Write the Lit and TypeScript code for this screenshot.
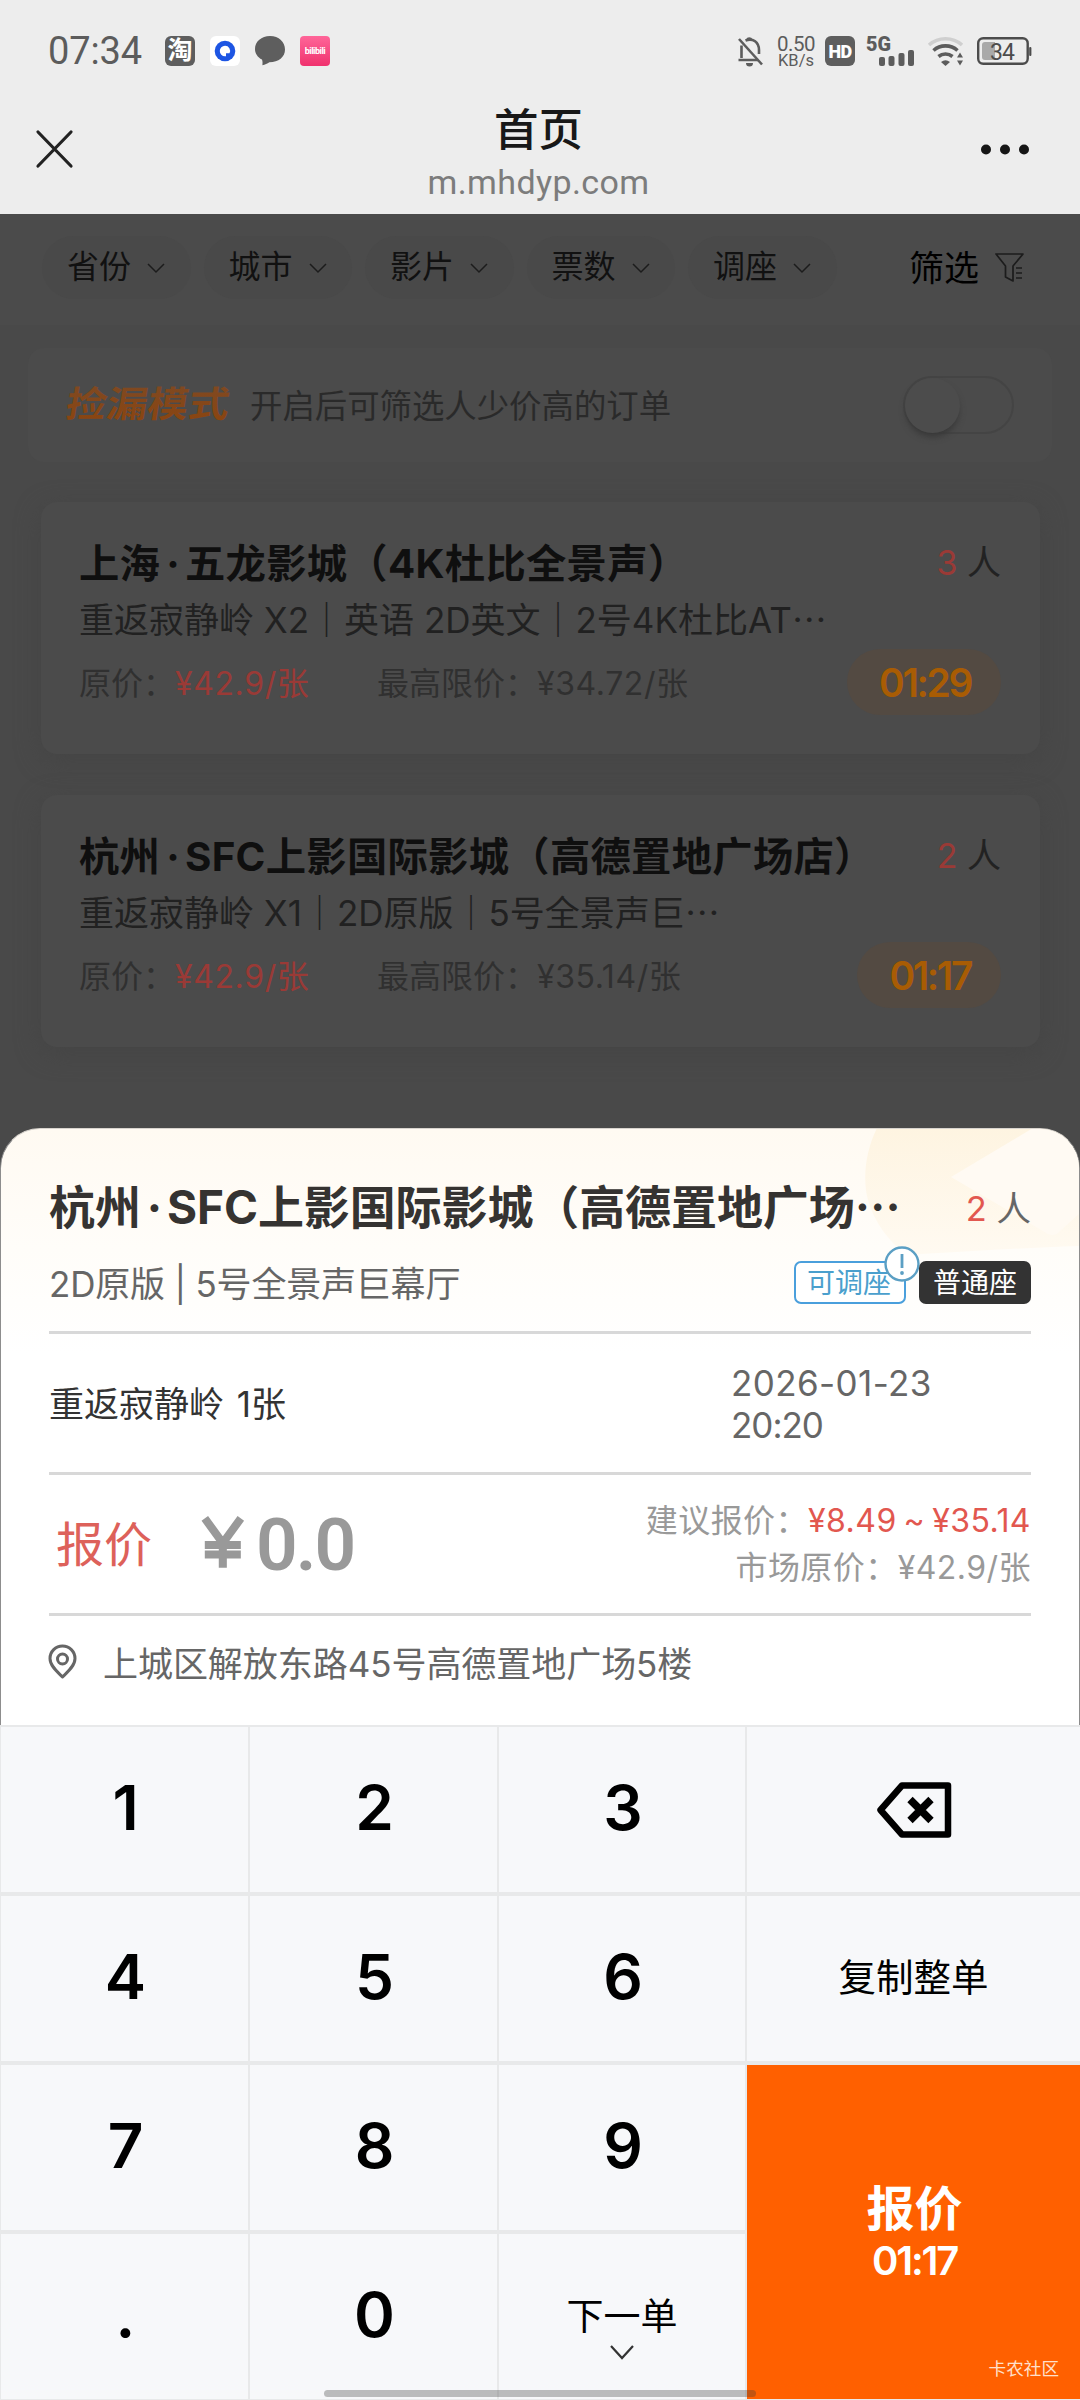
import { LitElement, html, css } from "lit";
import { customElement, property } from "lit/decorators.js";

interface Order {
  city: string;
  cinema: string;
  detail: string;
  people: number;
  price: string;
  limit: string;
  time: string;
}

const FILTERS = ["省份", "城市", "影片", "票数", "调座"];

const ORDERS: Order[] = [
  { city: "上海", cinema: "五龙影城（4K杜比全景声）", detail: "重返寂静岭 X2｜英语 2D英文｜2号4K杜比AT", people: 3, price: "¥42.9/张", limit: "¥34.72/张", time: "01:29" },
  { city: "杭州", cinema: "SFC上影国际影城（高德置地广场店）", detail: "重返寂静岭 X1｜2D原版｜5号全景声巨", people: 2, price: "¥42.9/张", limit: "¥35.14/张", time: "01:17" },
];

const fonts = css`
  :host {
    display: block;
    font-family: Inter, "Noto Sans CJK SC", sans-serif;
    box-sizing: border-box;
  }
  * { box-sizing: border-box; }
  svg { display: block; flex: none; overflow: visible; }
  .sep { margin: 0 5px 0 6px; }
  .more { display: inline-block; font-family: "Noto Sans CJK SC", sans-serif; line-height: 1; }
`;

@customElement("status-bar")
export class StatusBar extends LitElement {
  static styles = [fonts, css`
    :host { height: 102px; color: #5c5c5c; font-family: Roboto, "Noto Sans CJK SC", sans-serif; }
    .bar { display: flex; align-items: center; height: 102px; padding: 0 48px 0 48px; }
    .time { font-size: 38px; line-height: 44px; width: 117px; letter-spacing: -0.1px; }
    .apps { display: flex; gap: 15px; flex: 1; }
    .app { width: 30px; height: 30px; border-radius: 6px; display: flex; align-items: center; justify-content: center; }
    .tao { background: #5e5e5e; color: #fff; font-size: 25px; line-height: 30px; font-weight: 700; }
    .blue { background: #fff; }
    .pink { background: linear-gradient(#ff6699, #f0326e); color: #fff; font-size: 9px; line-height: 12px; font-weight: 700; border-radius: 4px; letter-spacing: -0.5px; }
    .right { display: flex; align-items: center; }
    .speed { width: 40px; margin: 0 9px 0 12px; display: flex; flex-direction: column; align-items: center; white-space: nowrap; }
    .s1 { font-size: 20.5px; line-height: 18px; letter-spacing: -0.5px; }
    .s2 { font-size: 16.500px; line-height: 15px; }
    .hd { width: 30px; height: 30px; border-radius: 6px; background: #5e5e5e; color: #fff; font-weight: 900; font-size: 18px; line-height: 31px; text-align: center; letter-spacing: -0.6px; margin-right: 12px; }
    .signal { margin-right: 13px; }
    .wifi { margin-right: 13px; }
    .g5 { font: 900 20px Roboto, sans-serif; }
    .bt { font: 400 23px Roboto, sans-serif; }
  `];
  render() {
    return html`<div class="bar">
      <span class="time">07:34</span>
      <div class="apps">
        <span class="app tao">淘</span>
        <span class="app blue">
          <svg width="30" height="30" viewBox="0 0 30 30"><circle cx="15" cy="15" r="10.3" fill="#1d55e3"/><path d="M15 9.800a5 5 0 1 0 0 10.400h1v-3h3.500A5 5 0 0 0 15 9.800z" fill="#fff"/></svg>
        </span>
        <svg width="30" height="30" viewBox="0 0 30 30"><path d="M15 0C6.500 0 0 5.500 0 13c0 4.500 2.600 8.300 7 10.600.7 1.900.6 3.800.4 5.600 2.600-.5 4.900-1.600 7-3C23.600 26.200 30 21 30 13.500S24 0 15 0z" fill="#5e5e5e"/></svg>
        <span class="app pink">bilibili</span>
      </div>
      <div class="right">
        <svg width="27" height="31" viewBox="0 0 27 31" fill="none" stroke="#5c5c5c" stroke-width="2.600">
          <path d="M2 3L25 28.500"/><path d="M4.500 9.500V22M1.500 24H21M8.500 4.500C16 1.500 22 6.500 22 14v4"/>
          <path d="M9 27h7a3.500 3.500 0 0 1-7 0z" fill="#5c5c5c" stroke="none"/><path d="M9 3.500a3.500 3.500 0 0 1 6.500 0z" fill="#5c5c5c" stroke="none"/>
        </svg>
        <div class="speed"><span class="s1">0.50</span><span class="s2">KB/s</span></div>
        <span class="hd">HD</span>
        <svg class="signal" width="48" height="30" viewBox="0 0 48 30" fill="#5c5c5c">
          <text class="g5" x="-1" y="15" textLength="25" lengthAdjust="spacingAndGlyphs">5G</text>
          <rect x="12" y="21" width="6" height="9" rx="2"/><rect x="21.500" y="20" width="6" height="10" rx="2"/><rect x="31.500" y="17" width="6" height="13" rx="2"/><rect x="41" y="14" width="6" height="16" rx="2"/>
        </svg>
        <svg class="wifi" width="36" height="30" viewBox="0 0 36 30" fill="none" stroke="#5c5c5c" stroke-width="3.600">
          <path d="M1 9a25 25 0 0 1 33 0" stroke="#cfcfcf"/><path d="M5.500 14.500a18 18 0 0 1 24 0"/><path d="M10.500 20.500a11 11 0 0 1 14 0"/>
          <path d="M13 26q4.500-3.500 9 0l-4.500 4z" fill="#5c5c5c" stroke="none"/><path d="M29 21.500l3-5 3 5zM29 24.500l3 5 3-5z" fill="#5c5c5c" stroke="none"/>
        </svg>
        <svg width="55" height="28" viewBox="0 0 55 28">
          <rect x="1.200" y="1.200" width="49.500" height="25.600" rx="5" fill="none" stroke="#4c4c4c" stroke-width="2.400"/>
          <path d="M5 8q0-3 3-3h10v18H8q-3 0-3-3z" fill="#a9a9a9"/><rect x="52.200" y="10" width="2.200" height="9" rx="1" fill="#4c4c4c"/>
          <text class="bt" x="13" y="22.500" textLength="25" fill="#4c4c4c">34</text>
        </svg>
      </div>
    </div>`;
  }
}

@customElement("title-bar")
export class TitleBar extends LitElement {
  static styles = [fonts, css`
    :host { height: 112px; }
    .row { display: flex; justify-content: space-between; padding: 0 50px 0 35px; height: 112px; }
    .close { margin-top: 28px; }
    .mid { display: flex; flex-direction: column; align-items: center; margin-left: 22px; }
    .h { font-size: 44.500px; line-height: 56px; font-weight: 500; color: #181818; }
    .u { font: 34px/49px Roboto, sans-serif; letter-spacing: 0.4px; color: #7c7c7c; }
    .dots { margin-top: 42px; }
  `];
  render() {
    return html`<div class="row">
      <svg class="close" width="40" height="38" viewBox="0 0 40 38" stroke="#222" stroke-width="3.200" stroke-linecap="round"><path d="M3 2L36 36M36 2L3 36"/></svg>
      <div class="mid"><span class="h">首页</span><span class="u">m.mhdyp.com</span></div>
      <svg class="dots" width="50" height="11" viewBox="0 0 50 11" fill="#161616"><circle cx="6" cy="5.500" r="5"/><circle cx="25" cy="5.500" r="5"/><circle cx="44" cy="5.500" r="5"/></svg>
    </div>`;
  }
}

@customElement("filter-bar")
export class FilterBar extends LitElement {
  static styles = [fonts, css`
    :host { height: 111px; background: #4b4b4b; }
    .row { display: flex; align-items: center; gap: 13px; height: 107px; padding: 0 56px 0 42px; }
    .pill { display: flex; align-items: center; gap: 16px; width: 148.500px; height: 63px; border-radius: 32px; background: #494949; padding-left: 25px; font-size: 32px; line-height: 48px; color: #111; }
    .name { margin-top: -1px; }
    .all { display: flex; align-items: center; gap: 16px; margin-left: auto; font-size: 35px; color: #000; }
    .all .name { margin-top: -4px; }
  `];
  render() {
    return html`<div class="row">
      ${FILTERS.map((f) => html`<span class="pill"><span class="name">${f}</span><svg width="18" height="10" viewBox="0 0 18 10" fill="none" stroke="#1c1c1c" stroke-width="1.500"><path d="M1 1l8 8 8-8"/></svg></span>`)}
      <span class="all"><span class="name">筛选</span><svg width="29" height="31" viewBox="0 0 29 31" fill="none" stroke="#1c1c1c" stroke-width="1.700" stroke-linejoin="round"><path d="M1 2h27L18 14v15l-7.500-4V14z"/><path d="M21 16h6M21 21h6M21 26h6"/></svg></span>
    </div>`;
  }
}

@customElement("mode-card")
export class ModeCard extends LitElement {
  static styles = [fonts, css`
    :host { margin: 23px 28px 0; }
    .card { display: flex; align-items: center; height: 114px; border-radius: 16px; background: #4b4b4b; padding: 0 38px; }
    .tip { margin-top: -3px; font-size: 32.400px; color: #2a2a2a; flex: 1; }
    .mark { font: 700 36px "Noto Sans CJK SC", sans-serif; }
    .toggle { width: 111px; height: 58px; border-radius: 29px; border: 2px solid #444; }
    .knob { width: 55px; height: 55px; border-radius: 50%; background: #4c4c4c; box-shadow: 0 5px 6px -1px #393939; }
  `];
  render() {
    return html`<div class="card">
      <svg width="184" height="44" viewBox="0 0 184 44">
        <defs><linearGradient id="g" x1="0" y1="0" x2="0" y2="1"><stop offset="0" stop-color="#7c4a26"/><stop offset="1" stop-color="#8c440e"/></linearGradient></defs>
        <text class="mark" transform="skewX(-9)" x="4" y="34" textLength="163" lengthAdjust="spacingAndGlyphs" fill="url(#g)">捡漏模式</text>
      </svg>
      <span class="tip">开启后可筛选人少价高的订单</span>
      <div class="toggle"><div class="knob"></div></div>
    </div>`;
  }
}

@customElement("order-card")
export class OrderCard extends LitElement {
  @property({ attribute: false }) order!: Order;
  static styles = [fonts, css`
    :host { margin: 0 40px 0 41px; }
    .card { height: 252px; border-radius: 16px; background: #4b4b4b; box-shadow: 0 6px 24px #454545; padding: 33px 39px 0 38px; white-space: nowrap; }
    .top { display: flex; justify-content: space-between; align-items: center; height: 50px; }
    .title { font-size: 40.300px; font-weight: 700; color: #0f0f0f; letter-spacing: 0.3px; }
    .people { font-size: 34px; color: #222; padding-top: 1px; }
    .n { color: #9a3a36; }
    .detail { font-size: 35px; line-height: 68px; height: 68px; margin-top: 1px; color: #212121; }
    .foot { display: flex; align-items: center; height: 58px; margin-top: -1px; font-size: 32px; color: #303030; }
    .price { width: 298px; margin-top: -3px; }
    .cost { letter-spacing: 0.6px; }
    .red { color: #9a3a36; }
    .limit { flex: 1; margin-top: -3px; }
    .time { display: flex; align-items: center; height: 66px; border-radius: 33px; background: #534a42; padding: 0 30px 0 32px; font: 600 39px Inter, sans-serif; letter-spacing: -2.400px; color: #a85c04; }
  `];
  render() {
    const o = this.order;
    return html`<div class="card">
      <div class="top"><span class="title">${o.city}<span class="sep">·</span>${o.cinema}</span><span class="people"><span class="n">${o.people}</span> 人</span></div>
      <div class="detail">${o.detail}<span class="more" lang="zh-CN">⋯</span></div>
      <div class="foot">
        <span class="price">原价：<span class="cost red">${o.price}</span></span>
        <span class="limit">最高限价：<span class="cost">${o.limit}</span></span>
        <span class="time">${o.time}</span>
      </div>
    </div>`;
  }
}

@customElement("quote-sheet")
export class QuoteSheet extends LitElement {
  static styles = [fonts, css`
    :host { height: 597px; }
    .sheet { position: relative; height: 597px; border-radius: 40px 40px 0 0; background: linear-gradient(#fffaf2 0, #fffdf9 120px, #fff 225px); border: 1px solid #8d8d8d; border-bottom: 0; border-top-color: #d8d4ce; padding: 50px 48px 0; overflow: hidden; color: #666; font-size: 35px; white-space: nowrap; }
    .deco { position: absolute; right: -1px; top: -1px; }
    .content { position: relative; }
    .top { display: flex; justify-content: space-between; align-items: center; height: 50px; }
    .title { font-size: 46px; font-weight: 700; color: #353331; letter-spacing: -0.1px; }
    .people { color: #666; font-size: 34.500px; padding-top: 3px; }
    .red { color: #e2574f; }
    .hall { display: flex; align-items: center; justify-content: space-between; height: 105px; border-bottom: 3px solid #d8d8d8; padding-top: 5px; }
    .room { letter-spacing: -0.2px; margin-top: -2px; }
    .tags { display: flex; gap: 13px; }
    .tag { position: relative; display: flex; align-items: center; justify-content: center; width: 112px; height: 43px; border-radius: 7px; font-size: 28px; line-height: 38px; }
    .adj { border: 2px solid #4a9fdc; color: #4a9fcd; background: #fff; padding-right: 2px; }
    .std { background: #333; color: #fff; }
    .bang { position: absolute; left: 88px; top: -17px; }
    .movie { display: flex; align-items: center; height: 141px; border-bottom: 3px solid #d8d8d8; color: #333; }
    .name { width: 682px; word-spacing: 3px; margin-top: -4px; }
    .date { display: flex; flex-direction: column; line-height: 42px; color: #666; letter-spacing: 0.4px; padding-top: 1px; }
    .clock { letter-spacing: -1px; }
    .quote { display: flex; align-items: center; height: 141px; border-bottom: 3px solid #d8d8d8; padding-left: 7px; }
    .label { font-size: 48px; color: #dd615a; width: 145px; margin-top: -7px; }
    .yen { width: 55px; }
    .amt { font: 600 73px Roboto, sans-serif; color: #999; letter-spacing: -2px; flex: 1; padding-top: 2px; }
    .hints { display: flex; flex-direction: column; align-items: flex-end; font-size: 32px; line-height: 46.500px; color: #999; letter-spacing: 0.45px; padding-top: 1px; }
    .rng { word-spacing: -2.500px; }
    .addr { display: flex; align-items: center; height: 92px; }
    .where { margin-left: 26px; margin-top: -2px; letter-spacing: -0.05px; }
  `];
  render() {
    return html`<div class="sheet">
      <svg class="deco" width="216" height="130" viewBox="0 0 216 130">
        <defs><linearGradient id="d" x1="0" y1="0" x2="0" y2="1"><stop offset="0" stop-color="#fef4e1"/><stop offset="1" stop-color="#fffaf1"/></linearGradient></defs>
        <path d="M13 0C2 22-2 50 4 72c6 22 20 40 38 55 55-3 110-7 174-9V0z" fill="url(#d)"/>
        <path d="M169 0L87 49l97 57q7 3 12-3l20-18V0z" fill="#fffaf3"/>
      </svg>
      <div class="content">
        <div class="top"><span class="title">杭州<span class="sep">·</span>SFC上影国际影城（高德置地广场<span class="more" lang="zh-CN">⋯</span></span><span class="people"><span class="red">2</span> 人</span></div>
        <div class="hall"><span class="room">2D原版 | 5号全景声巨幕厅</span>
          <div class="tags"><span class="tag adj">可调座
            <svg class="bang" width="36" height="36" viewBox="0 0 36 36"><circle cx="18" cy="18" r="16.500" fill="#fff" stroke="#5b9fc4" stroke-width="2.400"/><path d="M18 8v14" stroke="#5b9fc4" stroke-width="2.800"/><circle cx="18" cy="27" r="1.900" fill="#5b9fc4"/></svg>
          </span><span class="tag std">普通座</span></div>
        </div>
        <div class="movie"><span class="name">重返寂静岭 1张</span><span class="date"><span>2026-01-23</span><span class="clock">20:20</span></span></div>
        <div class="quote">
          <span class="label">报价</span>
          <svg class="yen" width="58" height="54" viewBox="0 0 58 54" fill="none" stroke="#999" stroke-width="8.500"><path d="M4 0L23 26 42 0M23 25v27M4 28h38M4 38h38"/></svg>
          <span class="amt">0.0</span>
          <div class="hints"><span>建议报价：<span class="red rng">¥8.49 ~ ¥35.14</span></span><span>市场原价：¥42.9/张</span></div>
        </div>
        <div class="addr">
          <svg width="28" height="34" viewBox="0 0 28 34" fill="none" stroke="#666" stroke-width="3" stroke-linejoin="round"><path d="M13.500 32C8.500 27 1 21 1 13.500a12.500 12.500 0 0 1 25 0C26 21 18.500 27 13.500 32z"/><circle cx="13.500" cy="14" r="5"/></svg>
          <span class="where">上城区解放东路45号高德置地广场5楼</span>
        </div>
      </div>
    </div>`;
  }
}

@customElement("key-pad")
export class KeyPad extends LitElement {
  static styles = [fonts, css`
    :host { height: 675px; position: relative; }
    .grid { display: grid; grid-template-columns: 247px 247px 246px 333px; grid-template-rows: 165px repeat(3, 165px); column-gap: 2px; row-gap: 4px; background: #e8e9ea; padding: 2px 0 1px 1px; height: 675px; }
    .k { background: #f7f8fa; display: flex; flex-direction: column; align-items: center; justify-content: center; font-size: 62px; font-weight: 600; color: #000; padding: 0 0 4px 2px; }
    .k.t { font-size: 37.500px; font-weight: 400; padding: 0 0 9px; }
    .k.del { padding: 0; }
    .k.next { font-size: 37px; font-weight: 400; line-height: 48px; padding: 22px 0 3px; }
    .chev { margin-top: 4px; }
    .k.go { grid-column: 4; grid-row: 3 / 5; background: #ff6000; color: #fff; padding-top: 2px; }
    .g1 { font-size: 48px; line-height: 60px; font-weight: 700; }
    .g2 { font-size: 40px; line-height: 44px; font-weight: 600; letter-spacing: -2.200px; }
    .home { position: absolute; left: 324px; bottom: 3px; width: 432px; height: 7px; border-radius: 4px; background: rgba(60, 60, 60, 0.32); }
    .mark { position: absolute; right: 21px; bottom: 18px; font-size: 17.600px; line-height: 26px; color: #ffe0cc; }
  `];
  key(n: string) {
    return html`<div class="k">${n}</div>`;
  }
  render() {
    return html`<div class="grid">
      ${["1", "2", "3"].map((n) => this.key(n))}
      <div class="k del"><svg width="76" height="56" viewBox="0 0 76 56" fill="none" stroke="#000" stroke-width="6.500" stroke-linejoin="round"><path d="M26 3.500h46v49H26L4.500 28z"/><path d="M34 17.500l21 21M55 17.500l-21 21" stroke-width="7.500"/></svg></div>
      ${["4", "5", "6"].map((n) => this.key(n))}
      <div class="k t">复制整单</div>
      ${["7", "8", "9"].map((n) => this.key(n))}
      <div class="k go"><span class="g1">报价</span><span class="g2">01:17</span></div>
      ${[".", "0"].map((n) => this.key(n))}
      <div class="k next">下一单<svg class="chev" width="26" height="15" viewBox="0 0 26 15" fill="none" stroke="#333" stroke-width="2.200"><path d="M2 1l11 12L24 1"/></svg></div>
    </div>
    <div class="home"></div><span class="mark">卡农社区</span>`;
  }
}

@customElement("app-root")
export class AppRoot extends LitElement {
  static styles = [fonts, css`
    :host { width: 1080px; height: 2400px; background: #494949; overflow: hidden; }
    .head { background: #ededed; height: 214px; }
    .behind { height: 914px; }
    .orders { display: flex; flex-direction: column; gap: 41px; margin-top: 40px; }
  `];
  render() {
    return html`
      <div class="head"><status-bar></status-bar><title-bar></title-bar></div>
      <div class="behind">
        <filter-bar></filter-bar>
        <mode-card></mode-card>
        <div class="orders">${ORDERS.map((o) => html`<order-card .order=${o}></order-card>`)}</div>
      </div>
      <quote-sheet></quote-sheet>
      <key-pad></key-pad>
    `;
  }
}
